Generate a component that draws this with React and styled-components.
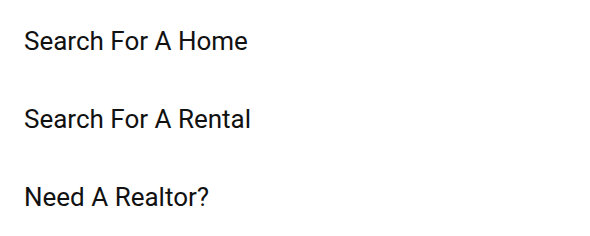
import React from "react";
import styled, { createGlobalStyle } from "styled-components";

const Global = createGlobalStyle`
  html, body { margin: 0; padding: 0; background: #ffffff; }
  body { font-family: Roboto, "Noto Sans", sans-serif; }
`;

const Menu = styled.nav`
  display: flex;
  flex-direction: column;
  width: 590px;
  height: 236px;
  box-sizing: border-box;
  padding-top: 2px;
`;

const Item = styled.a`
  display: flex;
  align-items: center;
  height: 78px;
  padding-left: 24px;
  font-size: 26px;
  color: #111111;
  text-decoration: none;
  letter-spacing: 0;
`;

const items = ["Search For A Home", "Search For A Rental", "Need A Realtor?"];

export default function App() {
  return (
    <>
      <Global />
      <Menu>
        {items.map((t) => (
          <Item key={t} href="#">{t}</Item>
        ))}
      </Menu>
    </>
  );
}
